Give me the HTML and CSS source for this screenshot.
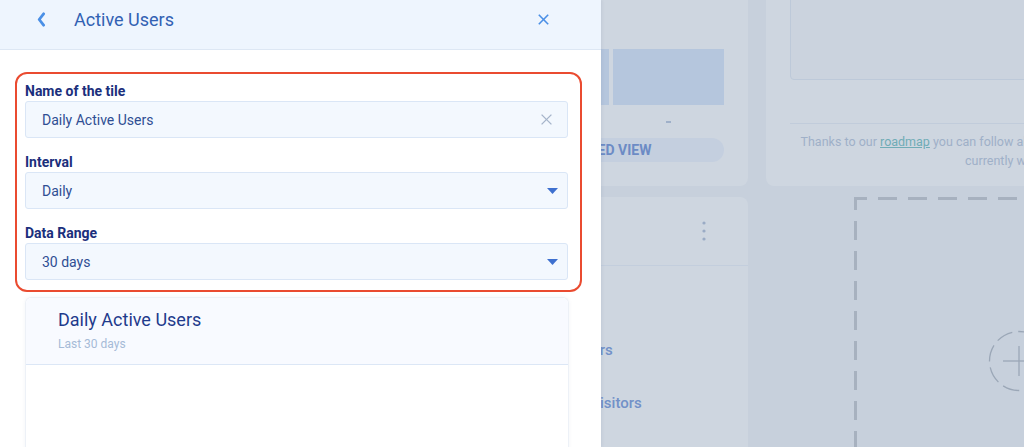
FILE: index.html
```html
<!DOCTYPE html>
<html lang="en">
<head>
    <meta charset="UTF-8">
    <meta name="viewport" content="width=device-width, initial-scale=1.0">
    <title>Active Users - Edit tile</title>
    <link rel="stylesheet" href="styles.css">
</head>
<body>

    <!-- Dashboard behind the drawer (dimmed) -->
    <main class="dashboard">
        <div class="dash-row dash-row-top">
            <section class="tile tile-chart">
                <div class="bar-cols">
                    <div class="bar-col">
                        <span class="bar"></span>
                        <span class="bar-label"></span>
                    </div>
                    <div class="bar-col">
                        <span class="bar"></span>
                        <span class="bar-label"><i class="dash"></i></span>
                    </div>
                </div>
                <button class="expand-btn">Expanded view</button>
            </section>

            <section class="tile tile-roadmap">
                <div class="roadmap-frame"></div>
                <div class="roadmap-note">
                    <p>Thanks to our <a href="#">roadmap</a> you can follow all the features and improvements we are</p>
                    <p>currently working on.</p>
                </div>
            </section>
        </div>

        <div class="dash-row dash-row-bottom">
            <section class="tile tile-list">
                <div class="tile-head">
                    <svg class="kebab" width="4" height="20" viewBox="0 0 4 20">
                        <circle cx="2" cy="2" r="1.6"/>
                        <circle cx="2" cy="10" r="1.6"/>
                        <circle cx="2" cy="18" r="1.6"/>
                    </svg>
                </div>
                <ul class="metric-list">
                    <li>New users</li>
                    <li>Unique visitors</li>
                </ul>
            </section>

            <section class="add-tile">
                <svg class="add-border" width="100%" height="100%">
                    <line class="dash-line" x1="0" y1="1.5" x2="100%" y2="1.5"/>
                    <line class="dash-line" x1="1.5" y1="0" x2="1.5" y2="100%"/>
                </svg>
                <svg class="add-icon" width="62" height="62" viewBox="0 0 62 62">
                    <circle cx="31" cy="31" r="29.5" class="add-circle"/>
                    <line x1="15" y1="31" x2="47" y2="31"/>
                    <line x1="31" y1="16" x2="31" y2="46"/>
                </svg>
            </section>
        </div>
    </main>

    <!-- Edit drawer -->
    <aside class="drawer">
        <header class="drawer-header">
            <svg class="back-icon" width="9" height="15" viewBox="0 0 9 15">
                <polyline points="6.6,1.8 2.2,7.5 6.6,13.2"/>
            </svg>
            <h1 class="drawer-title">Active Users</h1>
            <svg class="close-icon" width="11" height="11" viewBox="0 0 11 11">
                <line x1="0.8" y1="0.8" x2="10.2" y2="10.2"/>
                <line x1="10.2" y1="0.8" x2="0.8" y2="10.2"/>
            </svg>
        </header>

        <div class="settings-box">
            <div class="field">
                <label class="field-label">Name of the tile</label>
                <div class="field-control">
                    <span>Daily Active Users</span>
                    <svg class="clear-icon" width="11" height="11" viewBox="0 0 11 11">
                        <line x1="0.6" y1="0.6" x2="10.4" y2="10.4"/>
                        <line x1="10.4" y1="0.6" x2="0.6" y2="10.4"/>
                    </svg>
                </div>
            </div>
            <div class="field">
                <label class="field-label">Interval</label>
                <div class="field-control">
                    <span>Daily</span>
                    <svg class="caret" width="11" height="6" viewBox="0 0 11 6">
                        <polygon points="0,0 11,0 5.5,6"/>
                    </svg>
                </div>
            </div>
            <div class="field">
                <label class="field-label">Data Range</label>
                <div class="field-control">
                    <span>30 days</span>
                    <svg class="caret" width="11" height="6" viewBox="0 0 11 6">
                        <polygon points="0,0 11,0 5.5,6"/>
                    </svg>
                </div>
            </div>
        </div>

        <div class="preview-card">
            <div class="preview-head">
                <h2 class="preview-title">Daily Active Users</h2>
                <p class="preview-sub">Last 30 days</p>
            </div>
            <div class="preview-body"></div>
        </div>
    </aside>

</body>
</html>
```

FILE: styles.css
```css
/* Reset */
* {
    margin: 0;
    padding: 0;
    box-sizing: border-box;
}

body {
    font-family: 'Roboto', 'Noto Sans', sans-serif;
    width: 1024px;
    height: 447px;
    overflow: hidden;
    position: relative;
    background-color: #c7d0dc;
}

/* ---------- Dimmed dashboard ---------- */
.dashboard {
    display: flex;
    flex-direction: column;
    gap: 11px;
    margin-top: -200px;
    padding-left: 448px;
}

.dash-row {
    display: flex;
}

.dash-row-top {
    gap: 18px;
    height: 386px;
}

.dash-row-bottom {
    gap: 106px;
    height: 328px;
}

.tile {
    background-color: #ced6e0;
    border-radius: 8px;
    flex-shrink: 0;
}

.tile-chart {
    width: 300px;
    display: flex;
    flex-direction: column;
    justify-content: flex-end;
    padding: 0 24px 24px;
}

.bar-cols {
    display: flex;
    justify-content: flex-end;
    gap: 4px;
}

.bar-col {
    width: 111px;
    display: flex;
    flex-direction: column;
}

.bar {
    height: 56px;
    background-color: #b5c6dd;
}

.bar-label {
    height: 33px;
    display: flex;
    align-items: center;
    justify-content: center;
}

.dash {
    width: 5px;
    height: 2px;
    background-color: #9fb0c9;
}

.expand-btn {
    height: 24px;
    border: none;
    border-radius: 12px;
    background-color: #c4cfdf;
    color: #6c8bc5;
    font-family: inherit;
    font-size: 14px;
    font-weight: 700;
    text-transform: uppercase;
}

.tile-roadmap {
    width: 514px;
    padding: 24px 24px 0;
}

.roadmap-frame {
    height: 256px;
    background-color: #cbd3de;
    border: 1px solid #bdc9d9;
    border-radius: 4px;
}

.roadmap-note {
    margin-top: 43px;
    border-top: 1px solid #c1ccdb;
    padding-top: 8px;
    text-align: center;
    font-size: 12.5px;
    line-height: 19px;
    color: #9fb0c8;
    white-space: nowrap;
}

.roadmap-note a {
    color: #70acb6;
}

.tile-list {
    width: 300px;
}

.tile-head {
    height: 69px;
    border-bottom: 1px solid #c3cedd;
    display: flex;
    align-items: center;
    justify-content: flex-end;
    padding-right: 42px;
}

.kebab {
    fill: #9aabc5;
}

.metric-list {
    list-style: none;
    padding: 74px 0 0 94px;
    display: flex;
    flex-direction: column;
    gap: 33px;
    font-size: 15px;
    line-height: 20px;
    font-weight: 500;
    color: #7291c8;
}

.add-tile {
    width: 330px;
    flex-shrink: 0;
    position: relative;
    display: flex;
    align-items: center;
    justify-content: center;
}

.add-border {
    position: absolute;
    top: 0;
    left: 0;
}

.dash-line {
    stroke: #a7b1bf;
    stroke-width: 3;
    stroke-dasharray: 19 11;
    stroke-dashoffset: 6;
}

.add-icon {
    stroke: #9ba7b7;
    stroke-width: 1.3;
    fill: none;
}

.add-circle {
    stroke-dasharray: 17 6;
}

/* ---------- Drawer ---------- */
.drawer {
    position: absolute;
    top: 0;
    left: 0;
    bottom: 0;
    width: 601px;
    background-color: #fff;
    box-shadow: 1px 0 3px rgba(40, 70, 120, 0.08);
}

.drawer-header {
    height: 50px;
    background-color: #eef5fe;
    border-bottom: 1px solid #dde7f4;
    display: flex;
    align-items: center;
    padding: 0 52px 10px 37px;
}

.back-icon polyline {
    fill: none;
    stroke: #4a8fe6;
    stroke-width: 2.8;
    stroke-linecap: round;
    stroke-linejoin: round;
}

.drawer-title {
    flex: 1;
    margin-left: 28px;
    font-size: 18px;
    line-height: 22px;
    font-weight: 400;
    color: #3161b3;
}

.close-icon line {
    stroke: #4a8fe6;
    stroke-width: 1.6;
}

.settings-box {
    margin: 22px 0 0 15px;
    width: 567px;
    border: 2px solid #ea4b30;
    border-radius: 12px;
    padding: 8px 12px 10px 8px;
    display: flex;
    flex-direction: column;
    gap: 15px;
}

.field-label {
    display: block;
    font-size: 14px;
    line-height: 18px;
    font-weight: 700;
    color: #1b2f7c;
    margin-bottom: 1px;
}

.field-control {
    height: 37px;
    background-color: #f3f8fe;
    border: 1px solid #dae6f6;
    border-radius: 3px;
    display: flex;
    align-items: center;
    justify-content: space-between;
    padding: 0 9px 0 16px;
    font-size: 14px;
    color: #2f4e93;
}

.clear-icon {
    margin-right: 6px;
}

.clear-icon line {
    stroke: #a5b4ca;
    stroke-width: 1.3;
}

.caret {
    fill: #3e70cf;
}

.preview-card {
    margin: 5px 0 0 25px;
    width: 544px;
    height: 200px;
    border: 1px solid #edf1f7;
    border-bottom: none;
    border-radius: 6px 6px 0 0;
    box-shadow: 0 0 4px rgba(30, 60, 110, 0.05);
}

.preview-head {
    background-color: #f8faff;
    border-bottom: 1px solid #dce7f6;
    padding: 11px 32px 12px;
    border-radius: 6px 6px 0 0;
}

.preview-title {
    font-size: 18px;
    line-height: 22px;
    font-weight: 400;
    color: #1f3a8c;
}

.preview-sub {
    margin-top: 5px;
    font-size: 12px;
    line-height: 16px;
    color: #a6bad7;
}
```
